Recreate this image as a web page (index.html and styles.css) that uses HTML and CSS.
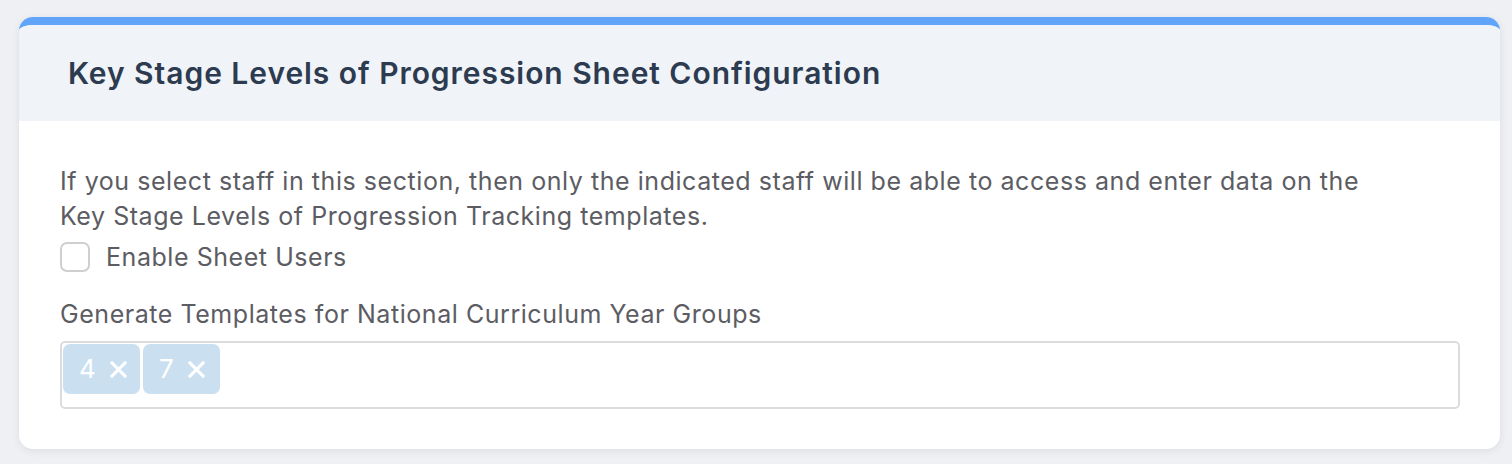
FILE: index.html
```html
<!DOCTYPE html>
<html lang="en">
<head>
<meta charset="utf-8">
<title>Key Stage Levels of Progression Sheet Configuration</title>
<link rel="stylesheet" href="styles.css">
</head>
<body>
<section class="card">
  <header class="card-header">
    <h2 class="card-title">Key Stage Levels of Progression Sheet Configuration</h2>
  </header>
  <div class="card-body">
    <p class="intro">If you select staff in this section, then only the indicated staff will be able to access and enter data on the<br>Key Stage Levels of Progression Tracking templates.</p>
    <label class="check-row">
      <span class="checkbox"></span>
      <span class="check-label">Enable Sheet Users</span>
    </label>
    <div class="field-label">Generate Templates for National Curriculum Year Groups</div>
    <div class="multi-select">
      <span class="tag"><span class="tag-text">4</span><svg class="tag-x" viewBox="0 0 20 20" aria-hidden="true"><path d="M2 2 L18 18 M18 2 L2 18"/></svg></span>
      <span class="tag"><span class="tag-text">7</span><svg class="tag-x" viewBox="0 0 20 20" aria-hidden="true"><path d="M2 2 L18 18 M18 2 L2 18"/></svg></span>
    </div>
  </div>
</section>
</body>
</html>
```
FILE: styles.css
```css
html, body {
  margin: 0;
  padding: 0;
}
body {
  background: #eff0f4;
  font-family: "Inter", "Liberation Sans", sans-serif;
  padding: 17px 12px 15px 19px;
}
.card {
  background: #ffffff;
  border-top: 8px solid #60a5fa;
  border-radius: 14px;
  box-shadow: 0 2px 8px rgba(0, 0, 0, 0.08);
  overflow: hidden;
  height: 432px;
  box-sizing: border-box;
}
.card-header {
  background: #f0f4f9;
  height: 96px;
  display: flex;
  align-items: center;
  padding-left: 49px;
}
.card-title {
  margin: 0;
  font-size: 30px;
  font-weight: 600;
  color: #2d3b50;
  letter-spacing: 0.95px;
}
.card-body {
  padding: 43px 40px 0 41px;
  color: #5c5c63;
  font-size: 25px;
  letter-spacing: 0.55px;
}
.intro {
  margin: 0;
  line-height: 35px;
}
.check-row {
  display: flex;
  align-items: center;
  gap: 16px;
  margin-top: 8px;
  height: 30px;
}
.checkbox {
  width: 26px;
  height: 26px;
  border: 2px solid #cfcfcf;
  border-radius: 7px;
  background: #fff;
}
.check-label {
  line-height: 30px;
}
.field-label {
  margin-top: 26px;
  line-height: 32px;
}
.multi-select {
  margin-top: 11px;
  height: 68px;
  box-sizing: border-box;
  border: 2px solid #dcdcdc;
  border-radius: 5px;
  padding: 1px;
  display: flex;
  align-items: flex-start;
  gap: 3px;
}
.tag {
  background: #cadff0;
  color: #ffffff;
  border-radius: 7px;
  height: 50px;
  width: 77px;
  box-sizing: border-box;
  padding: 0 0 0 16px;
  display: inline-flex;
  align-items: center;
  gap: 13px;
  font-size: 26px;
  letter-spacing: 0;
}
.tag-text {
  line-height: 1;
}
.tag-x {
  width: 19px;
  height: 19px;
  fill: none;
  stroke: #ffffff;
  stroke-width: 3.2;
  stroke-linecap: butt;
}
```
